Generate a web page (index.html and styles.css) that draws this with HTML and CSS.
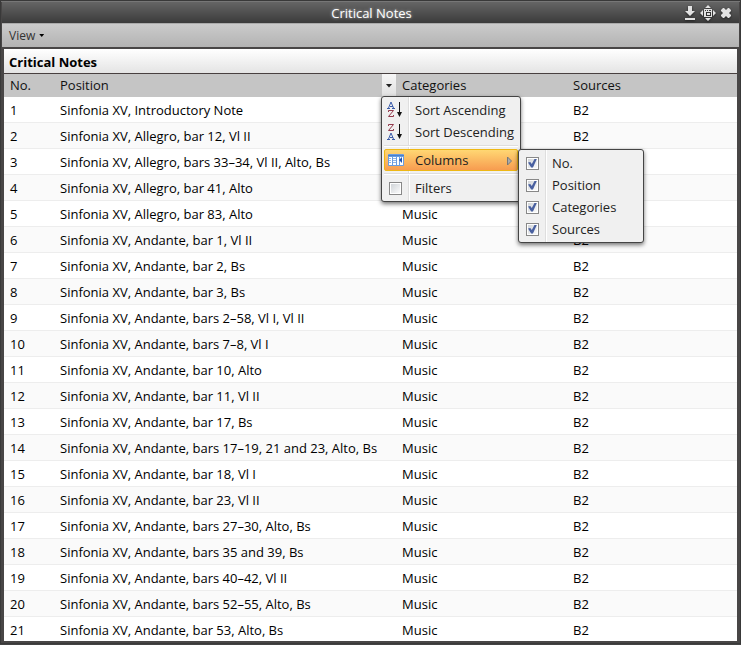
FILE: index.html
```
<!DOCTYPE html>
<html lang="en">
<head>
<meta charset="utf-8">
<title>Critical Notes</title>
<link rel="stylesheet" href="styles.css">
</head>
<body>
<main class="window">
  <header class="titlebar">
    <h1 class="title">Critical Notes</h1>
    <div class="tools">
      <button class="tool" type="button" aria-label="Minimize"><svg width="16" height="16" viewBox="0 0 16 16"><path d="M6 1h4v5h3l-5 5-5-5h3zM3 13h10v2H3z"/></svg></button>
      <button class="tool" type="button" aria-label="Maximize"><svg width="16" height="16" viewBox="0 0 16 16"><path d="M8 0l3 3H5zM8 16l3-3H5zM0 8l3-3v6zM16 8l-3-3v6z"/><path fill-rule="evenodd" d="M4 4h8v8H4zM5 5v1h1V5zM7 5v1h1V5zM9 5v1h2V5zM6 7v4h5V7zM7 8h3v2H7z"/></svg></button>
      <button class="tool" type="button" aria-label="Close"><svg width="16" height="16" viewBox="0 0 16 16"><path d="M3 5l2-2 1 0 2 2 2-2h1l2 2v1l-2 2 2 2v1l-2 2h-1l-2-2-2 2H5l-2-2v-1l2-2-2-2z"/></svg></button>
    </div>
  </header>
  <nav class="toolbar">
    <button class="view-button" type="button">View<span class="caret"></span></button>
  </nav>
  <section class="panel">
    <h2 class="panel-title">Critical Notes</h2>
    <table class="grid">
      <colgroup><col class="col-no"><col class="col-position"><col class="col-categories"><col></colgroup>
      <thead>
        <tr>
          <th>No.</th>
          <th>
            <div class="head">Position
              <button class="trigger" type="button" aria-label="Column menu"><span class="caret"></span></button>
              <div class="menu column-menu">
                <button class="item" type="button"><svg class="icon" width="16" height="16" viewBox="0 0 16 16"><path class="blue" d="M0 6.500h3M5 6.500h3M1.500 6l2.500-6 2.500 6M3 4.500h3"/><path class="red" d="M1.500 10V8.500h5l-5 6h5V13"/><path class="arrow" d="M12 0h1v10h2l-2.500 5-2.500-5h2z"/></svg>Sort Ascending</button>
                <button class="item" type="button"><svg class="icon" width="16" height="16" viewBox="0 0 16 16"><path class="red" d="M1.500 2V.5h5l-5 6h5V5"/><path class="blue" d="M0 15.500h3M5 15.500h3M1.500 15L4 9l2.500 6M3 13.500h3"/><path class="arrow" d="M12 0h1v10h2l-2.500 5-2.500-5h2z"/></svg>Sort Descending</button>
                <hr class="separator">
                <div class="branch">
                  <button class="item active" type="button"><svg class="icon" width="16" height="16" viewBox="0 0 16 16"><rect x="0" y="2" width="16" height="12" rx="1" fill="#6a9de0"/><path d="M0 3h16v1H0z" fill="#4a80cc"/><path d="M1 5h3v8H1zM5 5h3v8H5zM9 5h2v8H9zM12 5h3v8h-3z" fill="#fff"/><path d="M1 6.500h2M1 8.500h2M1 10.500h2M5 6.500h3M5 8.500h3M5 10.500h3" stroke="#8fb4e8"/><path d="M14 5v6l-3-3z" fill="#1c52b5"/></svg>Columns<svg class="more" width="7" height="10" viewBox="0 0 7 10"><path d="M1.500 1l4 4-4 4z" fill="#aaa" stroke="#777"/></svg></button>
                  <div class="menu submenu">
                    <label class="item"><input type="checkbox" checked>No.</label>
                    <label class="item"><input type="checkbox" checked>Position</label>
                    <label class="item"><input type="checkbox" checked>Categories</label>
                    <label class="item"><input type="checkbox" checked>Sources</label>
                  </div>
                </div>
                <hr class="separator">
                <label class="item"><input type="checkbox">Filters</label>
              </div>
            </div>
          </th>
          <th>Categories</th>
          <th>Sources</th>
        </tr>
      </thead>
      <tbody>
        <tr><td>1</td><td>Sinfonia XV, Introductory Note</td><td></td><td>B2</td></tr>
        <tr><td>2</td><td>Sinfonia XV, Allegro, bar 12, Vl II</td><td></td><td>B2</td></tr>
        <tr><td>3</td><td>Sinfonia XV, Allegro, bars 33–34, Vl II, Alto, Bs</td><td></td><td></td></tr>
        <tr><td>4</td><td>Sinfonia XV, Allegro, bar 41, Alto</td><td></td><td></td></tr>
        <tr><td>5</td><td>Sinfonia XV, Allegro, bar 83, Alto</td><td>Music</td><td></td></tr>
        <tr><td>6</td><td>Sinfonia XV, Andante, bar 1, Vl II</td><td>Music</td><td>B2</td></tr>
        <tr><td>7</td><td>Sinfonia XV, Andante, bar 2, Bs</td><td>Music</td><td>B2</td></tr>
        <tr><td>8</td><td>Sinfonia XV, Andante, bar 3, Bs</td><td>Music</td><td>B2</td></tr>
        <tr><td>9</td><td>Sinfonia XV, Andante, bars 2–58, Vl I, Vl II</td><td>Music</td><td>B2</td></tr>
        <tr><td>10</td><td>Sinfonia XV, Andante, bars 7–8, Vl I</td><td>Music</td><td>B2</td></tr>
        <tr><td>11</td><td>Sinfonia XV, Andante, bar 10, Alto</td><td>Music</td><td>B2</td></tr>
        <tr><td>12</td><td>Sinfonia XV, Andante, bar 11, Vl II</td><td>Music</td><td>B2</td></tr>
        <tr><td>13</td><td>Sinfonia XV, Andante, bar 17, Bs</td><td>Music</td><td>B2</td></tr>
        <tr><td>14</td><td>Sinfonia XV, Andante, bars 17–19, 21 and 23, Alto, Bs</td><td>Music</td><td>B2</td></tr>
        <tr><td>15</td><td>Sinfonia XV, Andante, bar 18, Vl I</td><td>Music</td><td>B2</td></tr>
        <tr><td>16</td><td>Sinfonia XV, Andante, bar 23, Vl II</td><td>Music</td><td>B2</td></tr>
        <tr><td>17</td><td>Sinfonia XV, Andante, bars 27–30, Alto, Bs</td><td>Music</td><td>B2</td></tr>
        <tr><td>18</td><td>Sinfonia XV, Andante, bars 35 and 39, Bs</td><td>Music</td><td>B2</td></tr>
        <tr><td>19</td><td>Sinfonia XV, Andante, bars 40–42, Vl II</td><td>Music</td><td>B2</td></tr>
        <tr><td>20</td><td>Sinfonia XV, Andante, bars 52–55, Alto, Bs</td><td>Music</td><td>B2</td></tr>
        <tr><td>21</td><td>Sinfonia XV, Andante, bar 53, Alto, Bs</td><td>Music</td><td>B2</td></tr>
      </tbody>
    </table>
  </section>
</main>
</body>
</html>
```
FILE: styles.css
```
* { box-sizing: border-box; }

body {
  margin: 0;
  background: #444;
  color: #000;
  font: 13px/20px "Open Sans", sans-serif;
}

button {
  margin: 0;
  padding: 0;
  border: 0;
  background: none;
  color: inherit;
  font: inherit;
}

svg { display: block; }

.window {
  padding: 1px;
  border: 1px solid #393939;
  background: #484646;
  box-shadow: inset 0 1px #777;
}

.titlebar {
  display: grid;
  grid-template-columns: 1fr auto 1fr;
  align-items: center;
  height: 21px;
  padding-left: 2px;
  background: linear-gradient(#656565, #3b3b3b);
}

.title {
  grid-column: 2;
  margin: 0;
  color: #fff;
  font-size: 13px;
  font-weight: 400;
  text-shadow: 0 0 3px #bbb;
}

.tools {
  display: flex;
  justify-content: flex-end;
  gap: 2px;
  padding-right: 5px;
}

.tool {
  fill: #e2e2e2;
  filter: drop-shadow(0 1px 1px #222);
}

.toolbar {
  display: flex;
  align-items: center;
  height: 24px;
  padding: 0 7px;
  border-top: 1px solid #aaa;
  background: linear-gradient(#cbcbcb, #b3b3b3);
}

.view-button {
  display: flex;
  align-items: center;
  gap: 4px;
  color: #333;
  font-size: 12px;
}

.caret {
  width: 7px;
  height: 4px;
  background: #222;
  clip-path: polygon(0 0, 100% 0, 50% 100%);
}

.view-button .caret {
  width: 5px;
  height: 3px;
  background: #000;
}

.panel {
  margin: 2px 2px 1px;
  background: #fff;
}

.panel-title {
  height: 25px;
  margin: 0;
  padding: 3px 5px;
  border-bottom: 1px solid #484040;
  background: linear-gradient(#fff, #e4e4e4);
  font-size: 13px;
  font-weight: 700;
}

.grid {
  width: 100%;
  border-collapse: separate;
  border-spacing: 0;
  table-layout: fixed;
}

.col-no { width: 50px; }
.col-position { width: 46.66%; }
.col-categories { width: 23.33%; }

th {
  height: 23px;
  padding: 0 6px;
  background: #c5c5c5;
  color: #111;
  font-weight: 400;
  line-height: 23px;
  text-align: left;
  vertical-align: top;
}

td {
  height: 26px;
  padding: 3px 6px 2px;
  border-bottom: 1px solid #ededed;
  white-space: nowrap;
}

tbody tr:nth-child(even) { background: #fafafa; }

tbody tr:last-child td {
  height: 24px;
  padding-bottom: 1px;
  border-bottom: 0;
}

.head {
  position: relative;
  margin-right: -6px;
}

.trigger {
  position: absolute;
  top: 0;
  right: 0;
  display: flex;
  align-items: center;
  justify-content: center;
  width: 14px;
  height: 23px;
  background: linear-gradient(#f6f6f6, #e0e0e0);
}

.menu {
  position: absolute;
  z-index: 1;
  padding: 2px;
  border: 1px solid #444;
  border-radius: 3px;
  background: linear-gradient(90deg, transparent 26px, #dedede 26px 27px, #fff 27px 28px, transparent 28px) #f0f0f0;
  box-shadow: 0 2px 4px #0008;
  color: #222;
}

.column-menu {
  top: 22px;
  left: calc(100% - 15px);
  width: 140px;
}

.item {
  position: relative;
  display: flex;
  align-items: center;
  gap: 11px;
  width: 100%;
  height: 22px;
  padding-left: 3px;
  line-height: 20px;
  white-space: nowrap;
}

.active {
  border: 1px solid #eeb815;
  border-radius: 2px;
  background: linear-gradient(#ffd773, #f79c50);
}

.active .icon { margin-right: 0; }

.more { margin: 2px 4px 0 auto; }

.separator {
  height: 2px;
  margin: 2px 0;
  border: 0;
  border-top: 1px solid #dedede;
  background: #fff;
}

.branch { position: relative; }

.submenu {
  top: 0;
  left: 100%;
  width: 126px;
}

.icon { flex: none; margin-right: 1px; }
.blue, .red { fill: none; stroke: #3b5ca8; }
.red { stroke: #933b4d; }
.arrow { fill: #111; }

input {
  appearance: none;
  flex: none;
  width: 13px;
  height: 13px;
  margin: 0 2px;
  border: 1px solid #888;
  background: linear-gradient(135deg, #ccd0d4, #fff);
  box-shadow: inset 0 0 0 1px #fff;
}

input:checked::after {
  content: "";
  display: block;
  width: 9px;
  height: 9px;
  margin: 1px;
  background: #4960a0;
  clip-path: polygon(0 45%, 25% 40%, 42% 62%, 75% 0, 100% 0, 55% 100%, 35% 100%);
}
```
